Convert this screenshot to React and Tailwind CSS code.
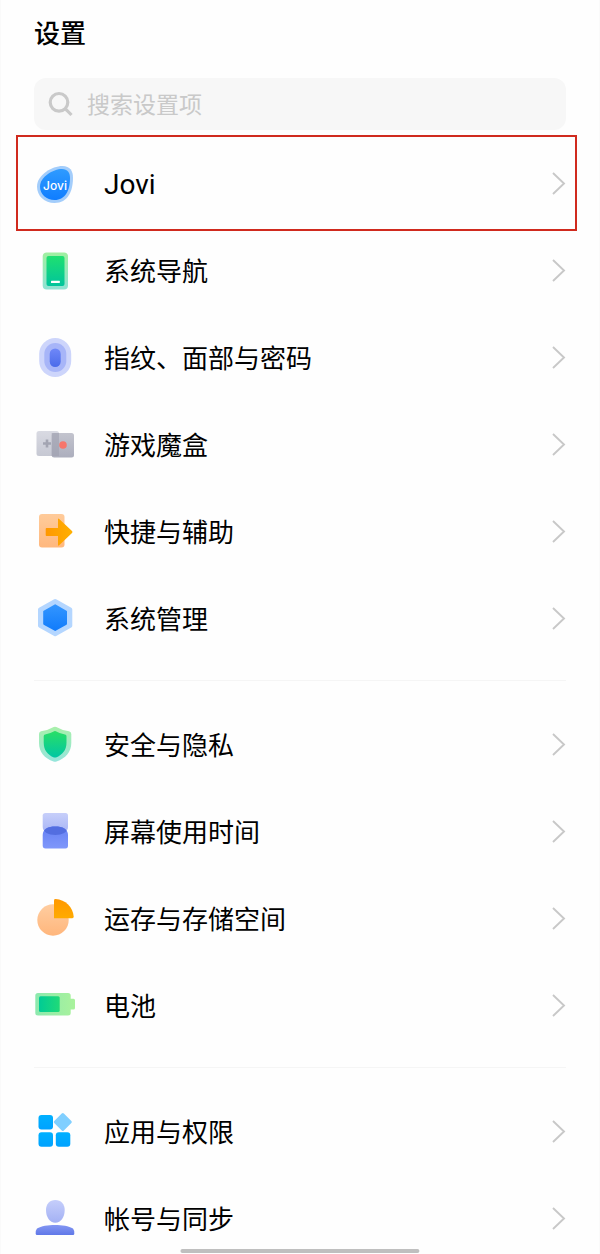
import React from "react";

function Gradient({ id, from, to, horizontal = false }) {
  return (
    <linearGradient id={id} x1="0" y1="0" x2={horizontal ? "1" : "0"} y2={horizontal ? "0" : "1"}>
      <stop offset="0" stopColor={from} />
      <stop offset="1" stopColor={to} />
    </linearGradient>
  );
}

function Icon({ children }) {
  return (
    <svg viewBox="0 0 42 42" className="size-[42px] shrink-0" aria-hidden="true">
      {children}
    </svg>
  );
}

function JoviIcon() {
  return (
    <Icon>
      <defs><Gradient id="jovi" from="#2f9bff" to="#0f7dff" /></defs>
      <path d="M28.500 4C36 4 39 9 39 15.500C39 29 34 41 20.500 41C10.500 41 3 34 3 24.500C3 13 18 4 28.500 4Z" fill="#a3cdfb" />
      <path d="M28 7C33.500 7 36 10.500 36 16C36 28 31.500 38 20.500 38C12.500 38 6 32.500 6 24.500C6 15 19 7 28 7Z" fill="url(#jovi)" />
      <text x="21" y="28" textAnchor="middle" fill="#fff" className="font-['Inter',sans-serif] text-[12px] font-medium">Jovi</text>
    </Icon>
  );
}

function NavigationIcon() {
  return (
    <Icon>
      <defs>
        <Gradient id="navOuter" from="#a0efa0" to="#8fe2d4" />
        <Gradient id="navInner" from="#1fe070" to="#00c49c" />
      </defs>
      <rect x="8.700" y="3.500" width="25.300" height="37" rx="4" fill="url(#navOuter)" />
      <rect x="12.500" y="7" width="18" height="30" rx="2" fill="url(#navInner)" />
      <rect x="17" y="31.800" width="8.800" height="2.200" rx="0.500" fill="#fff" />
    </Icon>
  );
}

function FingerprintIcon() {
  return (
    <Icon>
      <defs><Gradient id="finger" from="#6f88f8" to="#4b6bea" /></defs>
      <rect x="5.200" y="2" width="32" height="39" rx="16" fill="#cdd5fb" />
      <rect x="10.300" y="7" width="22" height="29" rx="11" fill="#a7b5f8" />
      <rect x="15.700" y="12.500" width="11" height="18.500" rx="5.500" fill="url(#finger)" />
    </Icon>
  );
}

function GameIcon() {
  return (
    <Icon>
      <defs>
        <Gradient id="gameLeft" from="#d9dae2" to="#c6c8d3" />
        <Gradient id="gameRight" from="#c3c4ce" to="#acaebd" />
      </defs>
      <rect x="2.500" y="8" width="22.500" height="25" rx="2.500" fill="url(#gameLeft)" />
      <rect x="17.700" y="10" width="22.300" height="24.500" rx="2.500" fill="url(#gameRight)" />
      <path d="M17.700 10H25V33H17.700Z" fill="#9fa1b0" fillOpacity="0.650" />
      <path d="M13 16.500V24.500M9 20.500H17" stroke="#a3a5b2" strokeWidth="2.600" />
      <circle cx="29" cy="22" r="3.800" fill="#f7766b" />
    </Icon>
  );
}

function ShortcutIcon() {
  return (
    <Icon>
      <defs>
        <Gradient id="doorFill" from="#ffcb9a" to="#ffb87e" />
        <Gradient id="arrowFill" from="#ff9800" to="#ffb000" horizontal />
      </defs>
      <rect x="5" y="4" width="25.500" height="33.500" rx="3" fill="url(#doorFill)" />
      <path d="M12.500 18H24V9.500Q24 8 25.200 9L38 21Q39 22 38 23L25.200 35.300Q24 36.400 24 34.800V26H12.500Q11.700 26 11.700 25V19Q11.700 18 12.500 18Z" fill="url(#arrowFill)" />
    </Icon>
  );
}

function SystemIcon() {
  return (
    <Icon>
      <defs><Gradient id="hexagon" from="#3295ff" to="#127cfb" /></defs>
      <path d="M21.200 4L36.300 12.500V28.800L21.200 37.300L6 28.800V12.500Z" fill="#b4d6ff" stroke="#b4d6ff" strokeWidth="4" strokeLinejoin="round" />
      <path d="M21.200 8.300L32 14.500V26.800L21.200 33L10.200 26.800V14.500Z" fill="url(#hexagon)" stroke="url(#hexagon)" strokeWidth="2" strokeLinejoin="round" />
    </Icon>
  );
}

function ShieldIcon() {
  return (
    <Icon>
      <defs>
        <Gradient id="shieldOuter" from="#a8f0aa" to="#96e5dc" />
        <Gradient id="shieldInner" from="#29df66" to="#00c6a4" />
      </defs>
      <path d="M19.700 4Q21 3.300 22.300 4Q28 7.300 35 8.300Q37.300 8.700 37.300 11V20C37.300 29 31.500 35.500 22.500 38.500Q21 39 19.500 38.500C10.500 35.500 5 29 5 20V11Q5 8.700 7 8.300Q14 7.300 19.700 4Z" fill="url(#shieldOuter)" />
      <path d="M20.200 8.300Q21 7.900 21.800 8.300Q26 10.700 31 11.500Q32.500 11.800 32.500 13.200V19.500C32.500 27 28.500 32 22 34.400Q21 34.800 20 34.400C13.500 32 9.700 27 9.700 19.500V13.200Q9.700 11.800 11 11.500Q16 10.700 20.200 8.300Z" fill="url(#shieldInner)" />
    </Icon>
  );
}

function ScreenTimeIcon() {
  return (
    <Icon>
      <defs>
        <Gradient id="glassTop" from="#c7cffa" to="#a3b1f5" />
        <Gradient id="glassBottom" from="#6681f4" to="#7f97fa" />
        <clipPath id="glassClip">
          <path d="M11.500 3H31.500Q34 3 34 5.500V17C34 22 28 25 21.300 25S8.700 22 8.700 17V5.500Q8.700 3 11.500 3Z" />
        </clipPath>
      </defs>
      <path d="M11.500 3H31.500Q34 3 34 5.500V17C34 22 28 25 21.300 25S8.700 22 8.700 17V5.500Q8.700 3 11.500 3Z" fill="url(#glassTop)" />
      <path d="M8.700 25C8.700 19 14 16.500 21.300 16.500S34 19 34 25V35.500Q34 38.500 31.500 38.500H11.500Q8.700 38.500 8.700 35.500Z" fill="url(#glassBottom)" />
      <path clipPath="url(#glassClip)" d="M8.700 25C8.700 19 14 16.500 21.300 16.500S34 19 34 25Z" fill="#536ee0" />
    </Icon>
  );
}

function StorageIcon() {
  return (
    <Icon>
      <defs>
        <Gradient id="pieBase" from="#ffcda0" to="#ffb67c" />
        <Gradient id="pieSlice" from="#ff9800" to="#ffab00" />
      </defs>
      <circle cx="19" cy="23" r="15.700" fill="url(#pieBase)" />
      <path d="M20 3.200Q20 2 21.500 2C31.500 2.700 39 10 39.700 19.800Q39.700 21.200 38.300 21.200H20Z" fill="url(#pieSlice)" />
    </Icon>
  );
}

function BatteryIcon() {
  return (
    <Icon>
      <defs>
        <Gradient id="batteryOuter" from="#8ce9ae" to="#a9f29c" horizontal />
        <Gradient id="batteryInner" from="#00cb95" to="#20da78" horizontal />
      </defs>
      <path d="M4 9H34Q36.700 9 36.700 11.500V14.800H39.500Q41 14.800 41 16.300V24Q41 25.500 39.500 25.500H36.700V29Q36.700 31.500 34 31.500H4Q1.300 31.500 1.300 29V11.500Q1.300 9 4 9Z" fill="url(#batteryOuter)" />
      <rect x="5" y="12.200" width="20.700" height="15.800" rx="1.500" fill="url(#batteryInner)" />
    </Icon>
  );
}

function AppsIcon() {
  return (
    <Icon>
      <defs><Gradient id="appTile" from="#00b0ff" to="#00a2ff" /></defs>
      <rect x="4.500" y="5" width="14.500" height="14.500" rx="3" fill="url(#appTile)" />
      <rect x="4.500" y="22.300" width="14.500" height="14.500" rx="3" fill="url(#appTile)" />
      <rect x="21.800" y="22.300" width="14.500" height="14.500" rx="3" fill="url(#appTile)" />
      <rect x="22" y="5.200" width="13.600" height="13.600" rx="1.500" transform="rotate(45 28.800 12)" fill="#80cfff" />
    </Icon>
  );
}

function AccountIcon() {
  return (
    <Icon>
      <defs>
        <Gradient id="head" from="#c5cefb" to="#a3b1f4" />
        <Gradient id="body" from="#8497f2" to="#6078e8" />
      </defs>
      <path d="M21.300 3C27 3 30.700 7 30.700 13C30.700 20 27 25.700 21.300 25.700S12 20 12 13C12 7 15.700 3 21.300 3Z" fill="url(#head)" />
      <path d="M3 31.500C7 29 14 28 21 28S35 29 39 31.500Q40.300 33 40.300 36.500Q40.300 38 39 38H3Q1.700 38 1.700 36.500Q1.700 33 3 31.500Z" fill="url(#body)" />
    </Icon>
  );
}

const groups = [
  [
    { label: "Jovi", icon: JoviIcon, highlighted: true },
    { label: "系统导航", icon: NavigationIcon },
    { label: "指纹、面部与密码", icon: FingerprintIcon },
    { label: "游戏魔盒", icon: GameIcon },
    { label: "快捷与辅助", icon: ShortcutIcon },
    { label: "系统管理", icon: SystemIcon },
  ],
  [
    { label: "安全与隐私", icon: ShieldIcon },
    { label: "屏幕使用时间", icon: ScreenTimeIcon },
    { label: "运存与存储空间", icon: StorageIcon },
    { label: "电池", icon: BatteryIcon },
  ],
  [
    { label: "应用与权限", icon: AppsIcon },
    { label: "帐号与同步", icon: AccountIcon },
  ],
];

function SettingRow({ label, icon: RowIcon, highlighted }) {
  return (
    <li className="relative">
      <button type="button" className="flex h-[87px] w-full items-center gap-7 text-left">
        <RowIcon />
        <span className={highlighted ? "flex-1 pt-1 text-[28px] leading-9" : "flex-1 pt-1 text-[26px] leading-9"}>{label}</span>
        <svg viewBox="0 0 16 24" className="h-6 w-4 shrink-0" fill="none" stroke="#c8c8c8" strokeWidth="1.900" aria-hidden="true">
          <path d="M3 2L14 12.500L3 23" />
        </svg>
      </button>
      {highlighted && (
        <span className="pointer-events-none absolute -top-1 -right-[11px] -bottom-[5px] -left-[18px] border-2 border-[#d02a1e]" />
      )}
    </li>
  );
}

export default function App() {
  return (
    <div className="relative flex h-screen flex-col overflow-hidden border-x border-[#fafafa] bg-[#fefefe] font-['Roboto','Noto_Sans_CJK_SC',sans-serif] text-black">
      <header className="px-[33px] pt-4 pb-[9px]">
        <h1 className="text-[26px] leading-9 font-medium">设置</h1>
        <label className="mt-[26px] flex h-[52px] items-center gap-[13px] rounded-xl bg-[#f7f7f7] px-[14px]">
          <svg viewBox="0 0 26 26" className="size-[26px] shrink-0" fill="none" stroke="#c9c9c9" strokeWidth="3.200" aria-hidden="true">
            <circle cx="11" cy="11.300" r="8.800" />
            <path d="M17.400 17.800L23.500 24" />
          </svg>
          <input
            type="search"
            aria-label="搜索设置项"
            placeholder="搜索设置项"
            className="min-w-0 flex-1 bg-transparent pt-1 text-[23px] leading-9 outline-none placeholder:text-[#c9c9c9]"
          />
        </label>
      </header>
      <main className="px-[33px]">
        {groups.map((group, index) => (
          <section key={index}>
            {index > 0 && <hr className="my-[19px] border-t border-[#f5f5f5]" />}
            <ul>
              {group.map((item) => (
                <SettingRow key={item.label} {...item} />
              ))}
            </ul>
          </section>
        ))}
      </main>
      <div className="absolute bottom-px left-1/2 h-1 w-2/5 -translate-x-1/2 rounded-full bg-[#bfbfbf]" />
    </div>
  );
}
